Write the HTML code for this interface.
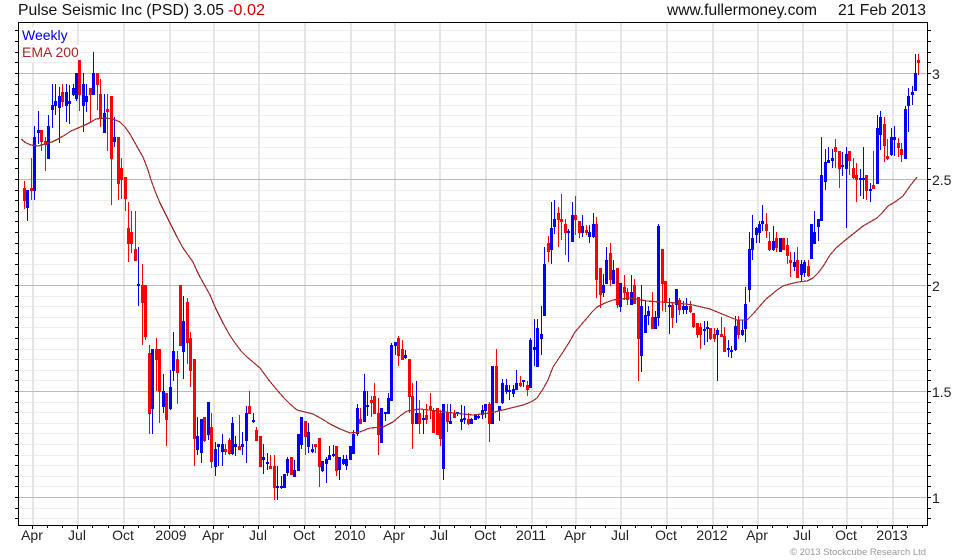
<!DOCTYPE html>
<html><head><meta charset="utf-8"><title>Pulse Seismic Inc</title>
<style>html,body{margin:0;padding:0;background:#fff}svg{display:block}text{font-family:"Liberation Sans",Arial,sans-serif}</style></head>
<body>
<svg width="980" height="560" viewBox="0 0 980 560" xmlns="http://www.w3.org/2000/svg">
<rect width="980" height="560" fill="#fff"/>
<g shape-rendering="crispEdges" fill="none">
<path stroke="#eeeeee" d="M19 30.5H927M19 41.5H927M19 52.5H927M19 62.5H927M19 84.5H927M19 94.5H927M19 105.5H927M19 115.5H927M19 126.5H927M19 137.5H927M19 147.5H927M19 158.5H927M19 168.5H927M19 190.5H927M19 200.5H927M19 211.5H927M19 221.5H927M19 232.5H927M19 243.5H927M19 253.5H927M19 264.5H927M19 274.5H927M19 296.5H927M19 306.5H927M19 317.5H927M19 327.5H927M19 338.5H927M19 349.5H927M19 359.5H927M19 370.5H927M19 380.5H927M19 402.5H927M19 412.5H927M19 423.5H927M19 433.5H927M19 444.5H927M19 455.5H927M19 465.5H927M19 476.5H927M19 486.5H927M19 508.5H927M19 518.5H927"/>
<path stroke="#e6e6e6" stroke-width="2" d="M33 23V525M78 23V525M124 23V525M170 23V525M214 23V525M259 23V525M305 23V525M351 23V525M395 23V525M440 23V525M486 23V525M532 23V525M576 23V525M621 23V525M667 23V525M713 23V525M758 23V525M803 23V525M847 23V525M893 23V525"/>
<path stroke="#bbbbbb" d="M19 73.5H927M19 179.5H927M19 285.5H927M19 391.5H927M19 497.5H927"/>
</g>
<rect x="20" y="27" width="50" height="17" fill="#fff"/>
<rect x="20" y="45" width="60" height="17" fill="#fff"/>
<g shape-rendering="crispEdges" fill="none">
<path stroke="#0000ff" stroke-width="1" d="M27.5 190V221M34.5 126V200M38.5 111V144M48.5 115V159M52.5 84V128M55.5 84V115M59.5 87V143M66.5 84V122M69.5 85V124M73.5 84V96M76.5 73V101M83.5 73V132M86.5 84V112M93.5 52V95M104.5 94V133M114.5 117V147M138.5 247V306M152.5 349V434M163.5 374V413M170.5 370V410M173.5 332V381M183.5 296V379M197.5 417V455M201.5 419V463M208.5 402V440M215.5 442V476M218.5 444V466M222.5 434V466M232.5 417V455M235.5 436V456M242.5 432V455M246.5 406V463M253.5 413V423M263.5 444V474M267.5 453V470M277.5 466V500M281.5 476V489M284.5 474V488M287.5 457V476M294.5 460V477M298.5 434V471M301.5 417V449M308.5 423V453M312.5 444V453M322.5 461V472M326.5 457V483M329.5 446V460M333.5 445V457M339.5 457V480M343.5 455V465M346.5 455V470M350.5 446V460M353.5 430V454M357.5 404V436M364.5 374V422M367.5 391V416M381.5 408V443M385.5 412V421M388.5 393V414M391.5 343V401M395.5 342V355M405.5 350V359M416.5 381V424M423.5 409V434M443.5 404V480M450.5 404V424M457.5 412V416M461.5 405V430M464.5 406V424M471.5 418V424M475.5 414V420M478.5 415V419M482.5 405V419M485.5 404V418M492.5 366V424M499.5 406V421M502.5 379V404M506.5 379V394M509.5 385V400M513.5 385V397M516.5 370V390M523.5 380V387M530.5 338V388M534.5 319V366M537.5 319V367M541.5 306V355M544.5 247V316M551.5 202V264M554.5 200V234M568.5 229V262M572.5 202V242M582.5 215V237M589.5 225V243M593.5 213V238M603.5 274V297M606.5 247V284M613.5 260V284M620.5 283V312M631.5 275V305M641.5 285V372M645.5 300V333M648.5 306V325M655.5 311V329M658.5 224V326M669.5 298V334M676.5 289V323M683.5 301V314M686.5 298V314M704.5 321V345M707.5 321V342M717.5 328V381M728.5 340V357M731.5 346V358M735.5 316V351M742.5 320V336M745.5 287V342M749.5 232V302M752.5 215V260M756.5 227V243M759.5 221V243M762.5 205V231M773.5 226V251M780.5 238V252M794.5 252V271M801.5 260V281M804.5 260V277M811.5 224V259M814.5 211V244M818.5 219V241M821.5 137V221M825.5 149V190M828.5 147V163M832.5 149V168M842.5 152V176M846.5 147V228M860.5 169V196M863.5 147V199M870.5 183V202M877.5 115V184M880.5 111V150M891.5 128V156M894.5 126V156M905.5 106V159M908.5 88V132M912.5 86V105M915.5 54V91"/>
<path stroke="#0000ff" stroke-width="3" d="M27.5 190V208M34.5 137V191M38.5 130V133M48.5 126V159M52.5 105V110M55.5 101V106M59.5 96V108M66.5 92V106M69.5 101V104M73.5 88V95M76.5 73V99M83.5 84V106M86.5 96V102M93.5 73V95M104.5 113V133M114.5 137V142M138.5 284V286M152.5 349V409M163.5 391V407M170.5 387V409M173.5 351V371M183.5 321V352M197.5 436V450M201.5 419V453M208.5 402V435M215.5 449V467M218.5 444V447M222.5 444V452M232.5 423V454M235.5 444V447M242.5 444V447M246.5 413V441M253.5 420V422M263.5 457V460M267.5 462V464M277.5 486V488M281.5 486V488M284.5 474V488M287.5 459V473M294.5 470V477M298.5 434V471M301.5 417V445M308.5 432V447M312.5 449V452M322.5 461V471M326.5 459V464M329.5 455V460M333.5 454V456M339.5 457V470M343.5 459V464M346.5 459V466M350.5 446V460M353.5 434V454M357.5 408V434M364.5 391V422M367.5 405V407M381.5 408V443M385.5 412V414M388.5 398V414M391.5 345V401M395.5 342V346M405.5 355V358M416.5 413V424M423.5 418V420M443.5 404V469M450.5 421V424M457.5 412V414M461.5 419V422M464.5 418V420M471.5 419V424M475.5 415V420M478.5 416V418M482.5 410V415M485.5 404V411M492.5 366V424M499.5 406V411M502.5 383V403M506.5 385V392M509.5 390V392M513.5 389V394M516.5 383V390M523.5 380V382M530.5 340V388M534.5 347V350M537.5 328V367M541.5 334V339M544.5 264V316M551.5 228V250M554.5 219V227M568.5 231V233M572.5 215V242M582.5 226V233M589.5 232V237M593.5 224V237M603.5 285V293M606.5 260V284M613.5 270V284M620.5 283V307M631.5 292V305M641.5 306V356M645.5 315V333M648.5 311V316M655.5 317V329M658.5 226V318M669.5 305V307M676.5 289V305M683.5 306V310M686.5 306V310M704.5 329V331M707.5 327V329M717.5 330V335M728.5 348V350M731.5 350V352M735.5 326V350M742.5 330V335M745.5 304V329M749.5 249V290M752.5 238V250M756.5 228V235M759.5 224V233M762.5 221V224M773.5 241V250M780.5 238V252M794.5 262V267M801.5 264V275M804.5 262V273M811.5 224V259M814.5 232V244M818.5 219V227M821.5 175V221M825.5 162V182M828.5 160V163M832.5 158V161M842.5 165V167M846.5 154V169M860.5 178V180M863.5 178V180M870.5 189V191M877.5 128V184M880.5 117V135M891.5 137V155M894.5 137V140M905.5 109V159M908.5 96V106M912.5 92V95M915.5 73V91"/>
<path stroke="#ff0000" stroke-width="1" d="M24.5 181V209M31.5 158V200M41.5 130V151M45.5 137V171M62.5 84V107M79.5 60V111M90.5 88V122M97.5 73V110M100.5 79V127M107.5 94V151M111.5 96V205M118.5 137V200M121.5 158V199M125.5 177V211M128.5 202V262M131.5 211V253M135.5 211V261M142.5 264V345M145.5 285V340M149.5 345V434M156.5 338V391M159.5 349V423M166.5 393V446M177.5 351V404M180.5 285V346M187.5 298V364M190.5 332V387M194.5 359V466M204.5 417V442M211.5 413V468M225.5 444V455M229.5 438V455M239.5 415V450M249.5 391V414M256.5 427V441M260.5 436V467M270.5 455V469M274.5 455V500M291.5 457V475M305.5 421V455M315.5 444V453M319.5 438V487M336.5 446V476M360.5 408V424M371.5 396V417M374.5 383V414M378.5 398V455M398.5 336V366M402.5 340V360M409.5 359V413M412.5 383V449M419.5 400V434M426.5 404V424M430.5 393V419M433.5 408V433M437.5 408V435M440.5 410V446M447.5 404V432M454.5 410V418M468.5 413V425M489.5 402V442M496.5 349V403M520.5 376V387M527.5 381V396M548.5 236V262M558.5 207V247M561.5 194V240M565.5 219V255M575.5 196V235M579.5 221V238M586.5 225V235M596.5 217V298M600.5 268V308M610.5 243V286M617.5 268V308M624.5 275V300M627.5 288V305M634.5 279V304M638.5 297V381M652.5 292V329M662.5 249V311M665.5 281V312M672.5 302V328M679.5 298V315M690.5 301V313M693.5 313V328M697.5 323V338M700.5 323V349M710.5 328V340M714.5 328V342M721.5 317V337M724.5 327V352M738.5 316V339M766.5 213V238M769.5 232V251M776.5 232V252M783.5 238V250M787.5 238V264M790.5 252V277M797.5 247V278M808.5 260V277M835.5 139V168M839.5 151V188M849.5 151V175M853.5 158V179M856.5 163V202M866.5 175V200M873.5 151V189M884.5 117V162M887.5 139V160M898.5 138V157M901.5 143V162M918.5 54V75"/>
<path stroke="#ff0000" stroke-width="3" d="M24.5 188V201M31.5 188V191M41.5 130V142M45.5 141V145M62.5 92V102M79.5 60V95M90.5 88V95M97.5 73V85M100.5 94V118M107.5 109V112M111.5 96V159M118.5 137V184M121.5 168V180M125.5 177V199M128.5 228V244M131.5 232V244M135.5 249V261M142.5 285V303M145.5 285V337M149.5 353V414M156.5 349V360M159.5 349V392M166.5 393V420M177.5 359V373M180.5 285V346M187.5 302V343M190.5 338V371M194.5 359V439M204.5 417V441M211.5 427V462M225.5 449V452M229.5 440V454M239.5 446V450M249.5 406V414M256.5 430V441M260.5 436V467M270.5 466V469M274.5 466V488M291.5 457V475M305.5 421V437M315.5 444V447M319.5 438V467M336.5 446V471M360.5 419V424M371.5 400V403M374.5 396V414M378.5 413V435M398.5 338V356M402.5 349V360M409.5 359V397M412.5 396V424M419.5 413V424M426.5 415V420M430.5 406V410M433.5 410V433M437.5 408V435M440.5 413V439M447.5 413V422M454.5 413V418M468.5 419V424M489.5 404V424M496.5 366V403M520.5 383V386M527.5 385V390M548.5 243V252M558.5 213V220M561.5 219V222M565.5 224V233M575.5 215V220M579.5 221V233M586.5 230V233M596.5 224V280M600.5 268V295M610.5 253V280M617.5 268V305M624.5 287V293M627.5 292V300M634.5 285V304M638.5 297V339M652.5 317V329M662.5 249V284M665.5 281V302M672.5 305V318M679.5 300V310M690.5 306V312M693.5 313V327M697.5 323V335M700.5 327V335M710.5 328V339M714.5 334V339M721.5 334V337M724.5 336V352M738.5 320V335M766.5 224V231M769.5 241V250M776.5 238V248M783.5 238V250M787.5 245V256M790.5 260V263M797.5 260V278M808.5 266V276M835.5 147V152M839.5 151V169M849.5 151V161M853.5 168V178M856.5 175V180M866.5 175V191M873.5 185V189M884.5 124V146M887.5 156V159M898.5 143V148M901.5 149V155M918.5 60V63"/>
<polyline stroke="#a52a2a" stroke-width="1.2" points="21,139 26,143 31,145 38,146 45,144 52,142 58,139 65,135 71,131 78,128 85,125 91,122 96,119 104,118 113,119 120,122 125,127 130,134 135,143 139,150 143,157 148,170 151,180 155,191 160,203 165,213 170,223 176,235 183,248 188,255 193,262 197,271 200,277 205,286 210,295 216,309 223,323 229,334 235,343 241,351 247,357 253,362 260,368 268,379 277,390 284,398 290,404 297,410 305,412 313,414 322,419 330,424 340,429 350,433 360,432 370,428 383,427 393,422 400,416 407,411 420,409 437,411 453,413 473,415 490,413 507,409 523,405 531,402 537,398 543,389 548,380 553,367 563,352 570,341 575,332 581,325 587,318 592,312 597,307 605,303 613,300 630,298 647,301 660,302 677,303 693,305 710,309 727,316 737,320 747,320 753,314 759,307 766,299 771,295 777,290 783,286 790,284 798,282 807,281 813,278 818,273 824,265 830,255 836,248 843,242 853,234 863,226 870,222 877,218 882,213 888,206 895,202 903,196 910,186 917,177"/>
<path stroke="#000" stroke-width="1" d="M18.5 22.5H927.5V525.5H18.5Z"/>
<path stroke="#000" stroke-width="1" d="M928 30.5H931M928 41.5H931M928 52.5H931M928 62.5H931M928 73.5H931M928 84.5H931M928 94.5H931M928 105.5H931M928 115.5H931M928 126.5H931M928 137.5H931M928 147.5H931M928 158.5H931M928 168.5H931M928 179.5H931M928 190.5H931M928 200.5H931M928 211.5H931M928 221.5H931M928 232.5H931M928 243.5H931M928 253.5H931M928 264.5H931M928 274.5H931M928 285.5H931M928 296.5H931M928 306.5H931M928 317.5H931M928 327.5H931M928 338.5H931M928 349.5H931M928 359.5H931M928 370.5H931M928 380.5H931M928 391.5H931M928 402.5H931M928 412.5H931M928 423.5H931M928 433.5H931M928 444.5H931M928 455.5H931M928 465.5H931M928 476.5H931M928 486.5H931M928 497.5H931M928 508.5H931M928 518.5H931"/>
<path stroke="#000" stroke-width="1" d="M15 30.5H18M15 41.5H18M15 52.5H18M15 62.5H18M15 73.5H18M15 84.5H18M15 94.5H18M15 105.5H18M15 115.5H18M15 126.5H18M15 137.5H18M15 147.5H18M15 158.5H18M15 168.5H18M15 179.5H18M15 190.5H18M15 200.5H18M15 211.5H18M15 221.5H18M15 232.5H18M15 243.5H18M15 253.5H18M15 264.5H18M15 274.5H18M15 285.5H18M15 296.5H18M15 306.5H18M15 317.5H18M15 327.5H18M15 338.5H18M15 349.5H18M15 359.5H18M15 370.5H18M15 380.5H18M15 391.5H18M15 402.5H18M15 412.5H18M15 423.5H18M15 433.5H18M15 444.5H18M15 455.5H18M15 465.5H18M15 476.5H18M15 486.5H18M15 497.5H18M15 508.5H18M15 518.5H18"/>
<path stroke="#000" stroke-width="1" d="M32.5 526V529M77.5 526V529M123.5 526V529M169.5 526V529M213.5 526V529M258.5 526V529M304.5 526V529M350.5 526V529M394.5 526V529M439.5 526V529M485.5 526V529M531.5 526V529M575.5 526V529M620.5 526V529M666.5 526V529M712.5 526V529M757.5 526V529M802.5 526V529M846.5 526V529M892.5 526V529"/>
<path stroke="#000" stroke-width="1" d="M47.5 526V528M62.5 526V528M92.5 526V528M108.5 526V528M138.5 526V528M154.5 526V528M184.5 526V528M199.5 526V528M228.5 526V528M243.5 526V528M273.5 526V528M289.5 526V528M319.5 526V528M335.5 526V528M365.5 526V528M380.5 526V528M409.5 526V528M424.5 526V528M454.5 526V528M470.5 526V528M500.5 526V528M516.5 526V528M546.5 526V528M561.5 526V528M590.5 526V528M605.5 526V528M635.5 526V528M651.5 526V528M681.5 526V528M697.5 526V528M727.5 526V528M742.5 526V528M772.5 526V528M787.5 526V528M817.5 526V528M832.5 526V528M861.5 526V528M877.5 526V528M907.5 526V528M922.5 526V528"/>
</g>
<text x="18" y="15" font-size="15.7" fill="#111" textLength="206" lengthAdjust="spacingAndGlyphs">Pulse Seismic Inc (PSD) 3.05</text>
<text x="228" y="15" font-size="15.7" fill="#cc0000" textLength="37" lengthAdjust="spacingAndGlyphs">-0.02</text>
<text x="667" y="15" font-size="15.4" fill="#111" textLength="150" lengthAdjust="spacingAndGlyphs">www.fullermoney.com</text>
<text x="838" y="15" font-size="15.7" fill="#111" textLength="88" lengthAdjust="spacingAndGlyphs">21 Feb 2013</text>
<text x="22" y="40" font-size="14" fill="#0000ee">Weekly</text>
<text x="22" y="57" font-size="14" fill="#a52a2a">EMA 200</text>
<g font-size="14" fill="#222">
<text x="932" y="79">3</text>
<text x="932" y="185">2.5</text>
<text x="932" y="291">2</text>
<text x="932" y="397">1.5</text>
<text x="932" y="503">1</text>
</g>
<g font-size="14" fill="#222" text-anchor="middle">
<text x="32" y="540">Apr</text><text x="77" y="540">Jul</text><text x="123" y="540">Oct</text><text x="171" y="540">2009</text><text x="213" y="540">Apr</text><text x="258" y="540">Jul</text><text x="304" y="540">Oct</text><text x="350" y="540">2010</text><text x="394" y="540">Apr</text><text x="439" y="540">Jul</text><text x="485" y="540">Oct</text><text x="531" y="540">2011</text><text x="575" y="540">Apr</text><text x="620" y="540">Jul</text><text x="666" y="540">Oct</text><text x="712" y="540">2012</text><text x="757" y="540">Apr</text><text x="802" y="540">Jul</text><text x="846" y="540">Oct</text><text x="892" y="540">2013</text>
</g>
<text x="790" y="555" font-size="9.5" fill="#999" textLength="136" lengthAdjust="spacingAndGlyphs">© 2013 Stockcube Research Ltd</text>
</svg>
</body></html>
